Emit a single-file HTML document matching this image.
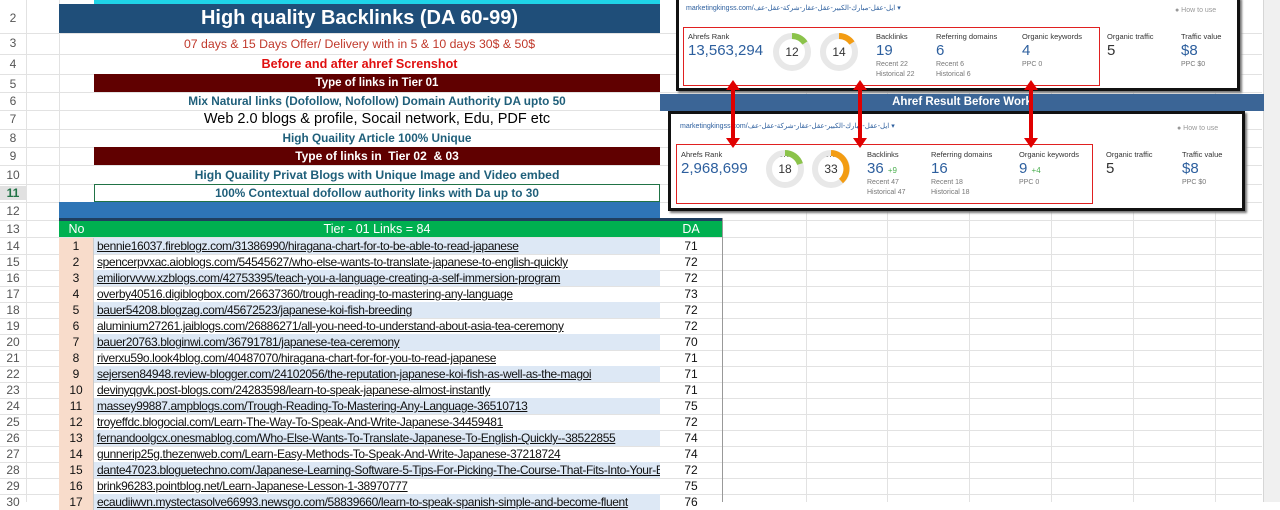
<!DOCTYPE html>
<html><head><meta charset="utf-8"><style>
*{margin:0;padding:0;box-sizing:border-box}
body{width:1280px;height:502px;overflow:hidden;background:#fff;font-family:"Liberation Sans",sans-serif;position:relative}
.a{position:absolute}
.rn{position:absolute;left:0;width:26px;text-align:center;font-size:12px;color:#555;font-family:"Liberation Sans",sans-serif}
.c{position:absolute;text-align:center;white-space:nowrap}
.hl{position:absolute;left:0;width:1262px;height:1px;background:#e2e2e2}
.vl{position:absolute;top:0;width:1px;height:502px;background:#e2e2e2}
.row{position:absolute;left:59px;height:16px;font-size:12px;color:#111}
.row .n{position:absolute;left:0;width:35px;height:16px;background:#f8dccb;text-align:center;line-height:16px;border-right:1px solid #ccc}
.row .l{position:absolute;left:35px;width:566px;height:16px;line-height:16px;padding-left:3px;text-decoration:underline;white-space:nowrap;overflow:hidden;letter-spacing:-0.38px}
.row .d{position:absolute;left:601px;width:62px;height:16px;text-align:center;line-height:16px}
.sm{font-size:7px;color:#333}
.lbl{font-size:7.5px;color:#333}
.big{font-size:15px;color:#2d5f9e}
.sub{font-size:7px;color:#777;line-height:10px}
</style></head><body>
<div class="vl" style="left:26px"></div><div class="vl" style="left:59px"></div>
<div class="vl" style="left:806px"></div><div class="vl" style="left:887px"></div><div class="vl" style="left:969px"></div><div class="vl" style="left:1051px"></div><div class="vl" style="left:1133px"></div><div class="vl" style="left:1215px"></div>
<div class="hl" style="top:33px"></div><div class="hl" style="top:54px"></div><div class="hl" style="top:74px"></div><div class="hl" style="top:92px"></div><div class="hl" style="top:110px"></div><div class="hl" style="top:129px"></div><div class="hl" style="top:147px"></div><div class="hl" style="top:165px"></div><div class="hl" style="top:184px"></div><div class="hl" style="top:202px"></div><div class="hl" style="top:220px"></div><div class="hl" style="top:237px"></div>
<div class="hl" style="top:254px"></div><div class="hl" style="top:270px"></div><div class="hl" style="top:286px"></div><div class="hl" style="top:302px"></div><div class="hl" style="top:318px"></div><div class="hl" style="top:334px"></div><div class="hl" style="top:350px"></div><div class="hl" style="top:366px"></div><div class="hl" style="top:382px"></div><div class="hl" style="top:398px"></div><div class="hl" style="top:414px"></div><div class="hl" style="top:430px"></div><div class="hl" style="top:446px"></div><div class="hl" style="top:462px"></div><div class="hl" style="top:478px"></div><div class="hl" style="top:494px"></div>
<div class="a" style="left:1263px;top:0;width:17px;height:502px;background:#f0f0f0;border-left:1px solid #d6d6d6"></div>

<div class="rn" style="top:11px">2</div><div class="rn" style="top:36px">3</div><div class="rn" style="top:57px">4</div><div class="rn" style="top:77px">5</div><div class="rn" style="top:94px">6</div><div class="rn" style="top:112px">7</div><div class="rn" style="top:131px">8</div><div class="rn" style="top:149px">9</div><div class="rn" style="top:168px">10</div><div class="rn" style="top:186px;font-weight:bold;color:#217346;background:#e1e1e1;width:26px">11</div><div class="rn" style="top:204px">12</div><div class="rn" style="top:222px">13</div>
<div class="rn" style="top:239px">14</div><div class="rn" style="top:255px">15</div><div class="rn" style="top:271px">16</div><div class="rn" style="top:287px">17</div><div class="rn" style="top:303px">18</div><div class="rn" style="top:319px">19</div><div class="rn" style="top:335px">20</div><div class="rn" style="top:351px">21</div><div class="rn" style="top:367px">22</div><div class="rn" style="top:383px">23</div><div class="rn" style="top:399px">24</div><div class="rn" style="top:415px">25</div><div class="rn" style="top:431px">26</div><div class="rn" style="top:447px">27</div><div class="rn" style="top:463px">28</div><div class="rn" style="top:479px">29</div><div class="rn" style="top:495px">30</div>

<div class="a" style="left:94px;top:0;width:566px;height:4px;background:#1fd3e8"></div>
<div class="c" style="left:59px;top:4px;width:601px;height:29px;background:#1f4e79;color:#fff;font-size:20px;font-weight:bold;line-height:29px">High quality Backlinks (DA 60-99)</div>
<div class="c" style="left:59px;top:37px;width:601px;color:#c0392b;font-size:12.3px">07 days &amp; 15 Days Offer/ Delivery with in 5 &amp; 10 days 30$ &amp; 50$</div>
<div class="c" style="left:59px;top:57px;width:601px;color:#e01010;font-size:12.6px;font-weight:bold">Before and after ahref Screnshot</div>
<div class="c" style="left:94px;top:74px;width:566px;height:18px;background:#600000;color:#fff;font-size:11.5px;line-height:18px;font-weight:bold">Type of links in Tier 01</div>
<div class="c" style="left:94px;top:94px;width:566px;color:#1f5f7a;font-size:11.8px;font-weight:bold">Mix Natural links (Dofollow, Nofollow) Domain Authority DA upto 50</div>
<div class="c" style="left:94px;top:111px;width:566px;color:#000;font-size:14.5px">Web 2.0 blogs &amp; profile, Socail network, Edu, PDF etc</div>
<div class="c" style="left:94px;top:131px;width:566px;color:#1f5f7a;font-size:11.8px;font-weight:bold">High Quaility Article 100% Unique</div>
<div class="c" style="left:94px;top:147px;width:566px;height:18px;background:#600000;color:#fff;font-size:12px;line-height:18px;font-weight:bold">Type of links in&nbsp; Tier 02&nbsp; &amp; 03</div>
<div class="c" style="left:94px;top:168px;width:566px;color:#1f5f7a;font-size:12.2px;font-weight:bold">High Quaility Privat Blogs with Unique Image and Video embed</div>
<div class="c" style="left:94px;top:184px;width:566px;height:18px;border:1px solid #217346;background:#fff;color:#1f5f7a;font-size:11.8px;line-height:16px;font-weight:bold">100% Contextual dofollow authority links with Da up to 30</div>
<div class="a" style="left:59px;top:202px;width:601px;height:16px;background:#2e75b6"></div>
<div class="a" style="left:59px;top:218px;width:663px;height:3px;background:#1f3f5f"></div>
<div class="a" style="left:59px;top:221px;width:663px;height:16px;background:#00b050;color:#fff;font-size:12.5px;line-height:16px">
<span class="a" style="left:0;width:35px;text-align:center">No</span><span class="a" style="left:35px;width:566px;text-align:center">Tier - 01 Links = 84</span><span class="a" style="left:601px;width:62px;text-align:center">DA</span></div>
<div class="a" style="left:722px;top:218px;width:1px;height:284px;background:#999"></div>

<div class="row" style="top:238px"><div class="n">1</div><div class="l" style="background:#dde8f5">bennie16037.fireblogz.com/31386990/hiragana-chart-for-to-be-able-to-read-japanese</div><div class="d">71</div></div>
<div class="row" style="top:254px"><div class="n">2</div><div class="l">spencerpvxac.aioblogs.com/54545627/who-else-wants-to-translate-japanese-to-english-quickly</div><div class="d">72</div></div>
<div class="row" style="top:270px"><div class="n">3</div><div class="l" style="background:#dde8f5">emiliorvvvw.xzblogs.com/42753395/teach-you-a-language-creating-a-self-immersion-program</div><div class="d">72</div></div>
<div class="row" style="top:286px"><div class="n">4</div><div class="l">overby40516.digiblogbox.com/26637360/trough-reading-to-mastering-any-language</div><div class="d">73</div></div>
<div class="row" style="top:302px"><div class="n">5</div><div class="l" style="background:#dde8f5">bauer54208.blogzag.com/45672523/japanese-koi-fish-breeding</div><div class="d">72</div></div>
<div class="row" style="top:318px"><div class="n">6</div><div class="l">aluminium27261.jaiblogs.com/26886271/all-you-need-to-understand-about-asia-tea-ceremony</div><div class="d">72</div></div>
<div class="row" style="top:334px"><div class="n">7</div><div class="l" style="background:#dde8f5">bauer20763.bloginwi.com/36791781/japanese-tea-ceremony</div><div class="d">70</div></div>
<div class="row" style="top:350px"><div class="n">8</div><div class="l">riverxu59o.look4blog.com/40487070/hiragana-chart-for-for-you-to-read-japanese</div><div class="d">71</div></div>
<div class="row" style="top:366px"><div class="n">9</div><div class="l" style="background:#dde8f5">sejersen84948.review-blogger.com/24102056/the-reputation-japanese-koi-fish-as-well-as-the-magoi</div><div class="d">71</div></div>
<div class="row" style="top:382px"><div class="n">10</div><div class="l">devinyqgvk.post-blogs.com/24283598/learn-to-speak-japanese-almost-instantly</div><div class="d">71</div></div>
<div class="row" style="top:398px"><div class="n">11</div><div class="l" style="background:#dde8f5">massey99887.ampblogs.com/Trough-Reading-To-Mastering-Any-Language-36510713</div><div class="d">75</div></div>
<div class="row" style="top:414px"><div class="n">12</div><div class="l">troyeffdc.blogocial.com/Learn-The-Way-To-Speak-And-Write-Japanese-34459481</div><div class="d">72</div></div>
<div class="row" style="top:430px"><div class="n">13</div><div class="l" style="background:#dde8f5">fernandoolgcx.onesmablog.com/Who-Else-Wants-To-Translate-Japanese-To-English-Quickly--38522855</div><div class="d">74</div></div>
<div class="row" style="top:446px"><div class="n">14</div><div class="l">gunnerip25g.thezenweb.com/Learn-Easy-Methods-To-Speak-And-Write-Japanese-37218724</div><div class="d">74</div></div>
<div class="row" style="top:462px"><div class="n">15</div><div class="l" style="background:#dde8f5">dante47023.bloguetechno.com/Japanese-Learning-Software-5-Tips-For-Picking-The-Course-That-Fits-Into-Your-Budget</div><div class="d">72</div></div>
<div class="row" style="top:478px"><div class="n">16</div><div class="l">brink96283.pointblog.net/Learn-Japanese-Lesson-1-38970777</div><div class="d">75</div></div>
<div class="row" style="top:494px"><div class="n">17</div><div class="l" style="background:#dde8f5">ecaudiiwvn.mystectasolve66993.newsgo.com/58839660/learn-to-speak-spanish-simple-and-become-fluent</div><div class="d">76</div></div>

<div class="a" style="left:676px;top:-3px;width:564px;height:94px;background:#fff;border:3px solid #111;box-shadow:2px 2px 2px #777"></div>
<div class="a sm" style="left:686px;top:4px;color:#2d5f9e">marketingkingss.com/ایل-عقل-مبارك-الكبير-عقل-عقار-شركة-عقل-عف ▾</div>
<div class="a sm" style="left:1175px;top:7px;color:#999">● How to use</div>
<div class="a" style="left:683px;top:27px;width:417px;height:59px;border:1.5px solid #e02020"></div>
<div class="a lbl" style="left:688px;top:32px">Ahrefs Rank</div><div class="a big" style="left:688px;top:42px">13,563,294</div>
<div class="a lbl" style="left:788px;top:32px">UR</div><div class="a lbl" style="left:834px;top:32px">DR</div>
<svg class="a" style="left:770px;top:32px" width="100" height="40"><circle cx="22" cy="20" r="16" fill="none" stroke="#e8e8e8" stroke-width="6"/><path d="M22 4 A16 16 0 0 1 35 11" fill="none" stroke="#8bc34a" stroke-width="6"/><circle cx="69" cy="20" r="16" fill="none" stroke="#e8e8e8" stroke-width="6"/><path d="M69 4 A16 16 0 0 1 82 11" fill="none" stroke="#f39c12" stroke-width="6"/><text x="22" y="24" font-size="12" text-anchor="middle" font-family="Liberation Sans" fill="#333">12</text><text x="69" y="24" font-size="12" text-anchor="middle" font-family="Liberation Sans" fill="#333">14</text></svg>
<div class="a lbl" style="left:876px;top:32px">Backlinks</div><div class="a big" style="left:876px;top:42px">19</div><div class="a sub" style="left:876px;top:60px">Recent 22<br>Historical 22</div>
<div class="a lbl" style="left:936px;top:32px">Referring domains</div><div class="a big" style="left:936px;top:42px">6</div><div class="a sub" style="left:936px;top:60px">Recent 6<br>Historical 6</div>
<div class="a lbl" style="left:1022px;top:32px">Organic keywords</div><div class="a big" style="left:1022px;top:42px">4</div><div class="a sub" style="left:1022px;top:60px">PPC 0</div>
<div class="a lbl" style="left:1107px;top:32px">Organic traffic</div><div class="a big" style="left:1107px;top:42px;color:#333">5</div>
<div class="a lbl" style="left:1181px;top:32px">Traffic value</div><div class="a big" style="left:1181px;top:42px">$8</div><div class="a sub" style="left:1181px;top:60px">PPC $0</div>

<div class="c" style="left:660px;top:94px;width:604px;height:17px;background:#3b6596;color:#fff;font-size:11.5px;font-weight:bold;line-height:17px">Ahref Result Before Work</div>

<div class="a" style="left:668px;top:111px;width:577px;height:100px;background:#fff;border:3px solid #111;box-shadow:2px 2px 2px #777"></div>
<div class="a sm" style="left:680px;top:122px;color:#2d5f9e">marketingkingss.com/ایل-عقل-مبارك-الكبير-عقل-عقار-شركة-عقل-عف ▾</div>
<div class="a sm" style="left:1177px;top:125px;color:#999">● How to use</div>
<div class="a" style="left:676px;top:144px;width:417px;height:60px;border:1.5px solid #e02020"></div>
<div class="a lbl" style="left:681px;top:150px">Ahrefs Rank</div><div class="a big" style="left:681px;top:160px">2,968,699</div>
<div class="a lbl" style="left:778px;top:150px">UR</div><div class="a lbl" style="left:824px;top:150px">DR</div>
<svg class="a" style="left:763px;top:149px" width="100" height="40"><circle cx="22" cy="20" r="16" fill="none" stroke="#e8e8e8" stroke-width="6"/><path d="M22 4 A16 16 0 0 1 37 15" fill="none" stroke="#8bc34a" stroke-width="6"/><circle cx="68" cy="20" r="16" fill="none" stroke="#e8e8e8" stroke-width="6"/><path d="M68 4 A16 16 0 0 1 78 32" fill="none" stroke="#f39c12" stroke-width="6"/><text x="22" y="24" font-size="12" text-anchor="middle" font-family="Liberation Sans" fill="#333">18</text><text x="68" y="24" font-size="12" text-anchor="middle" font-family="Liberation Sans" fill="#333">33</text></svg>
<div class="a lbl" style="left:867px;top:150px">Backlinks</div><div class="a big" style="left:867px;top:160px">36 <span style="font-size:8px;color:#4caf50">+9</span></div><div class="a sub" style="left:867px;top:178px">Recent 47<br>Historical 47</div>
<div class="a lbl" style="left:931px;top:150px">Referring domains</div><div class="a big" style="left:931px;top:160px">16</div><div class="a sub" style="left:931px;top:178px">Recent 18<br>Historical 18</div>
<div class="a lbl" style="left:1019px;top:150px">Organic keywords</div><div class="a big" style="left:1019px;top:160px">9 <span style="font-size:8px;color:#4caf50">+4</span></div><div class="a sub" style="left:1019px;top:178px">PPC 0</div>
<div class="a lbl" style="left:1106px;top:150px">Organic traffic</div><div class="a big" style="left:1106px;top:160px;color:#333">5</div>
<div class="a lbl" style="left:1182px;top:150px">Traffic value</div><div class="a big" style="left:1182px;top:160px">$8</div><div class="a sub" style="left:1182px;top:178px">PPC $0</div>

<svg class="a" style="left:720px;top:80px" width="330" height="70">
<g fill="#e00000" stroke="none">
<rect x="11" y="8" width="4" height="52"/><polygon points="6,10 13,0 20,10"/><polygon points="6,58 13,68 20,58"/>
<rect x="138" y="8" width="4" height="52"/><polygon points="133,10 140,0 147,10"/><polygon points="133,58 140,68 147,58"/>
<rect x="309" y="8" width="4" height="52"/><polygon points="304,10 311,0 318,10"/><polygon points="304,58 311,68 318,58"/>
</g></svg>
</body></html>
